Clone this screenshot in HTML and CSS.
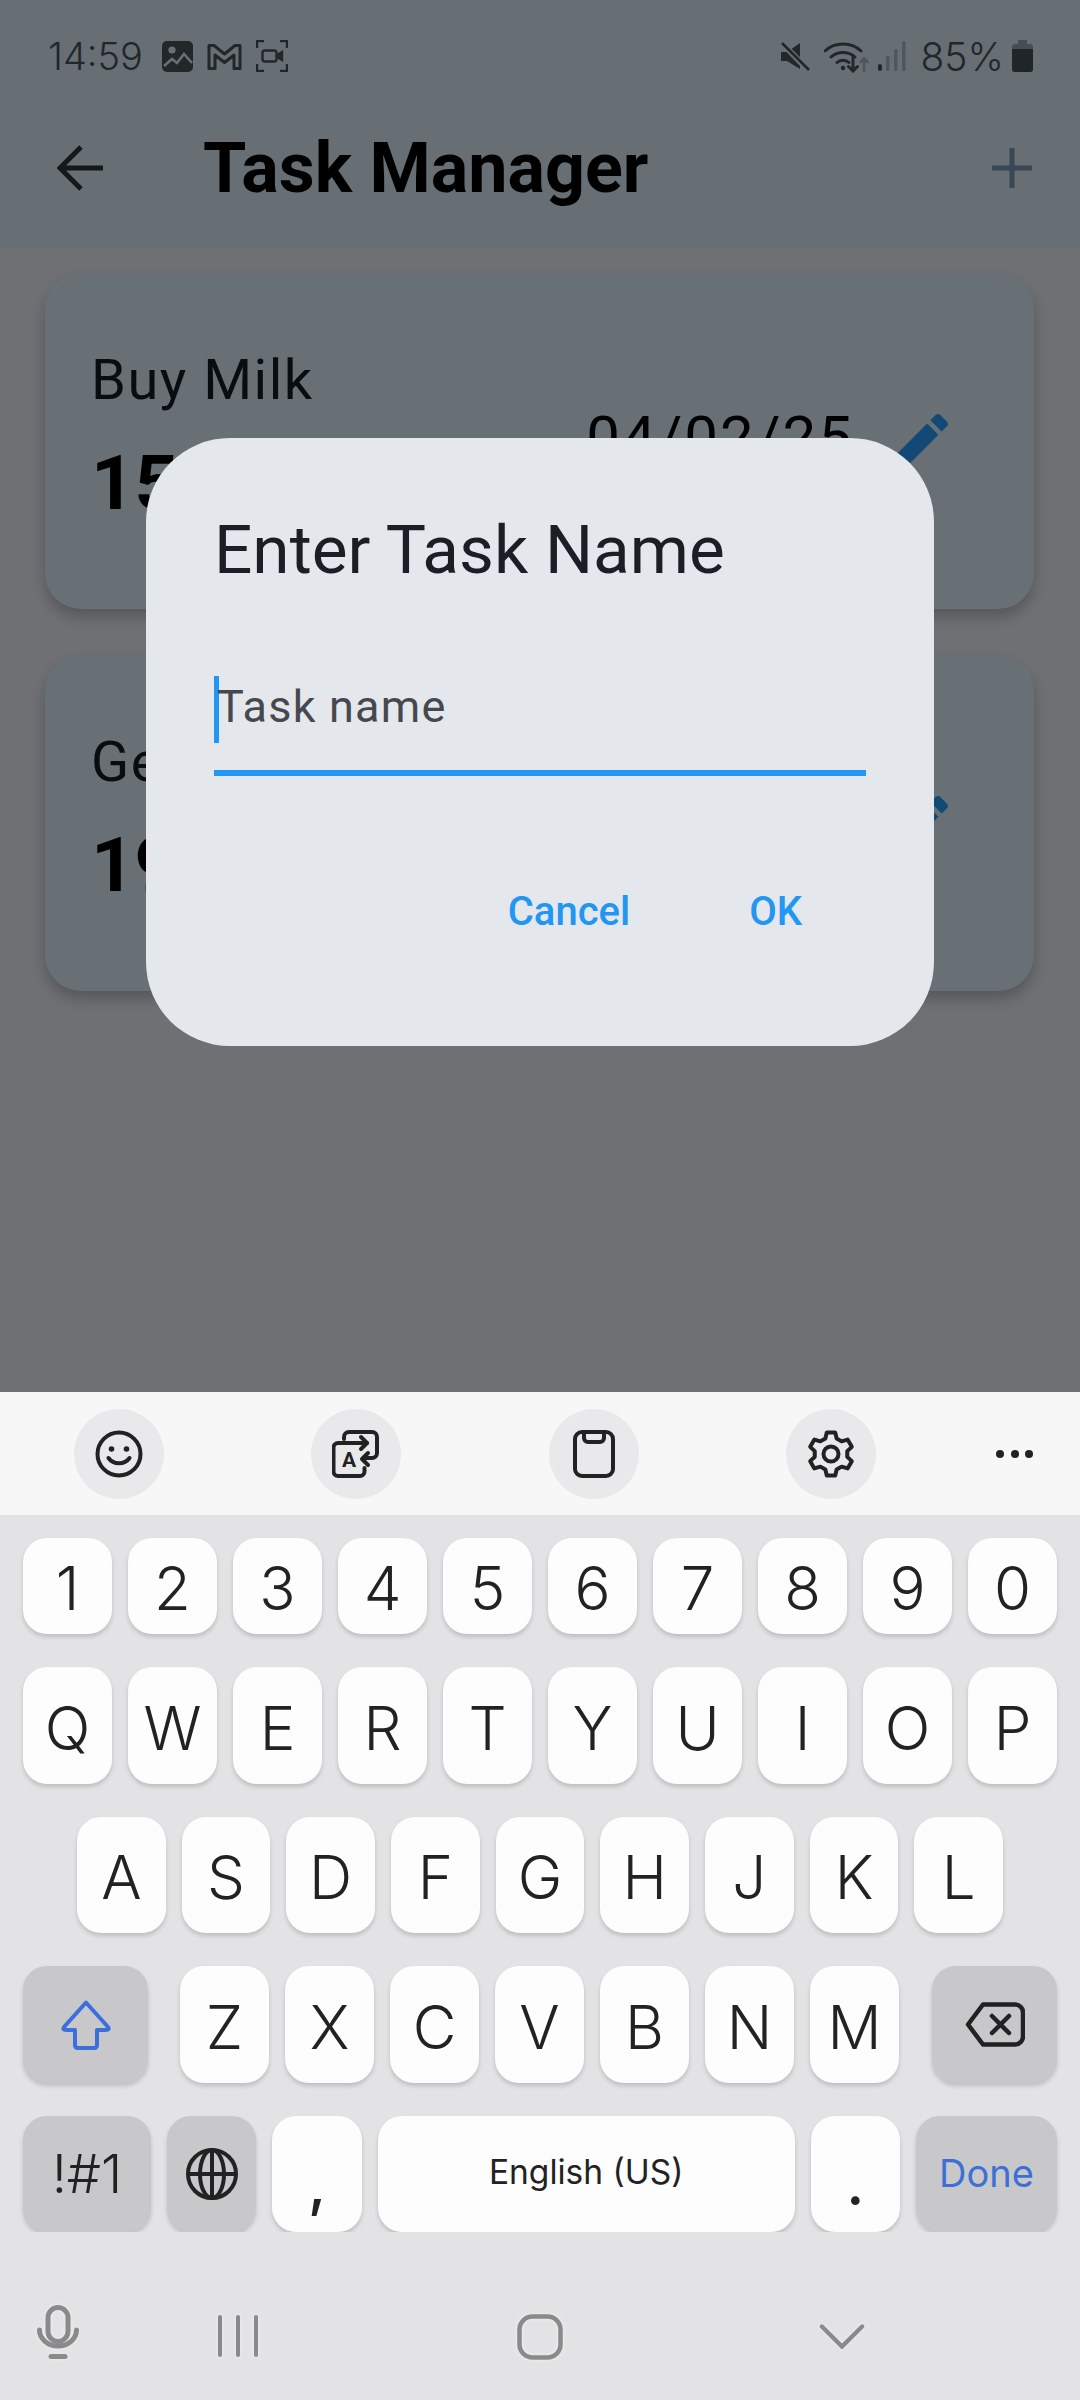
FILE: index.html
```html
<!DOCTYPE html>
<html lang="en">
  <head>
    <meta charset="UTF-8" />
    <meta name="viewport" content="width=device-width, initial-scale=1.0" />
    <title>Task Manager</title>
    <link rel="stylesheet" href="styles.css">
  </head>
  <body>
    <div class="phone">
      <!-- Dimmed app behind the dialog -->
      <div class="app">
        <header class="top">
          <div class="status">
            <span class="clock">14:59</span>
            <svg class="st-photo" viewBox="0 0 31 31"><rect width="31" height="31" rx="5" fill="#22272a"/><circle cx="10" cy="9" r="3.6" fill="#687076"/><path d="M2 25l8-7 5 4 7-9 8 9" fill="none" stroke="#687076" stroke-width="2.6"/></svg>
            <svg class="st-mail" viewBox="0 0 35 27"><path d="M2 25.5V2.5h5L17.5 11 28 2.500h5v23h-6V12l-9.500 7.500L8 12v13.500z" fill="none" stroke="#22272a" stroke-width="3" stroke-linejoin="round"/></svg>
            <svg class="st-rec" viewBox="0 0 32 32" fill="none" stroke="#22272a" stroke-width="2.400"><path d="M1 8V1h7M24 1h7v7M31 24v7h-7M8 31H1v-7"/><rect x="6.500" y="10.500" width="14" height="11" rx="2.500"/><path d="M21 15l5-3v8l-5-3" fill="#22272a"/></svg>
            <span class="spacer"></span>
            <svg class="st-mute" viewBox="0 0 30 29"><path d="M1 10h6L20 1v26L7 19H1z" fill="#22272a"/><path d="M1 0l28 29" stroke="#687076" stroke-width="6"/><path d="M2 1l27 27" stroke="#22272a" stroke-width="2.600"/></svg>
            <svg class="st-wifi" viewBox="0 0 46 33" fill="none" stroke="#22272a" stroke-width="3" stroke-linecap="round"><path d="M1 11a27 27 0 0 1 36 0"/><path d="M7 17a18 18 0 0 1 24 0"/><path d="M13 22.500a9 9 0 0 1 12 0"/><circle cx="19" cy="28" r="2.200" fill="#22272a" stroke="none"/><path d="M29 16v15M24.500 26.500l4.500 4.500 4.500-4.500"/><path d="M40 31V19M36.500 22l3.500-3.500 3.500 3.500" stroke="#4d555a" stroke-width="2.500"/></svg>
            <svg class="st-signal" viewBox="0 0 28 30" fill="#50575c"><rect x="0" y="23" width="4" height="7" rx="2" fill="#22272a"/><rect x="8" y="15" width="3.500" height="15" rx="1.500"/><rect x="16" y="8" width="3.500" height="22" rx="1.500"/><rect x="24" y="0" width="3.500" height="30" rx="1.500"/></svg>
            <span class="percent">85%</span>
            <svg class="st-batt" viewBox="0 0 21 32"><path d="M6 0h9v5H6z" fill="#474e53"/><rect y="4" width="21" height="28" rx="3" fill="#474e53"/><path d="M0 9h21v20a3 3 0 0 1-3 3H3a3 3 0 0 1-3-3z" fill="#1f2528"/></svg>
          </div>
          <div class="appbar">
            <svg class="back" viewBox="0 0 46 46" fill="none" stroke="#14181b" stroke-width="5"><path d="M46 23H4M24 2L3 23l21 21"/></svg>
            <h1 class="title">Task Manager</h1>
            <svg class="plus" viewBox="0 0 40 40" stroke="#3a4754" stroke-width="5"><path d="M20 0v40M0 20h40"/></svg>
          </div>
        </header>

        <main class="tasks">
          <div class="card">
            <div class="card-text">
              <div class="task-name">Buy Milk</div>
              <div class="task-time">15:30</div>
            </div>
            <div class="task-date">04/02/25</div>
            <svg class="edit" viewBox="0 0 24 24" fill="#124a75"><path d="M3 17.250V21h3.750L17.810 9.940l-3.750-3.750L3 17.250zM20.710 7.040c.39-.39.39-1.020 0-1.410l-2.340-2.340c-.39-.39-1.020-.39-1.410 0l-1.830 1.830 3.750 3.750 1.830-1.830z"/></svg>
          </div>
          <div class="card">
            <div class="card-text">
              <div class="task-name">Get Eggs</div>
              <div class="task-time">19:00</div>
            </div>
            <div class="task-date">05/02/25</div>
            <svg class="edit" viewBox="0 0 24 24" fill="#124a75"><path d="M3 17.250V21h3.750L17.810 9.940l-3.750-3.750L3 17.250zM20.710 7.040c.39-.39.39-1.020 0-1.410l-2.340-2.340c-.39-.39-1.020-.39-1.410 0l-1.830 1.830 3.750 3.750 1.830-1.830z"/></svg>
          </div>
        </main>

        <!-- Dialog -->
        <div class="dialog">
          <h2 class="dialog-title">Enter Task Name</h2>
          <div class="field">
            <span class="caret"></span>
            <span class="placeholder">Task name</span>
          </div>
          <div class="actions">
            <span class="action">Cancel</span>
            <span class="action">OK</span>
          </div>
        </div>
      </div>

      <!-- Keyboard -->
      <div class="toolbar">
        <div class="tools">
          <div class="tool">
            <svg viewBox="0 0 48 48" fill="none" stroke="#222" stroke-width="4" stroke-linecap="round"><circle cx="24" cy="24" r="21.500"/><circle cx="16.500" cy="19" r="2.800" fill="#222" stroke="none"/><circle cx="31.500" cy="19" r="2.800" fill="#222" stroke="none"/><path d="M13.500 28c5 7 16 7 21 0"/></svg>
          </div>
          <div class="tool">
            <svg viewBox="0 0 48 48" fill="none" stroke="#222" stroke-width="4" stroke-linecap="round" stroke-linejoin="round"><path d="M12 9V7a5 5 0 0 1 5-5h23a5 5 0 0 1 5 5v16a5 5 0 0 1-5 5h-8"/><path d="M35 13H6a4.500 4.500 0 0 0-4.500 4.500v24A4.500 4.500 0 0 0 6 46h22a4.500 4.500 0 0 0 4.500-4.500V38"/><path d="M29 7l6 6-6 6M36 23l-6 6 6 6"/><text x="17" y="37" text-anchor="middle" class="tool-a">A</text></svg>
          </div>
          <div class="tool">
            <svg viewBox="0 0 48 48" fill="none" stroke="#222" stroke-width="4" stroke-linejoin="round"><rect x="5" y="2" width="38" height="44" rx="7"/><path d="M14 2v6a4 4 0 0 0 4 4h12a4 4 0 0 0 4-4V2"/></svg>
          </div>
          <div class="tool">
            <svg viewBox="0 0 48 48" fill="none" stroke="#222" stroke-width="4" stroke-linejoin="round"><path d="M18.360 8.500L19.800 2.400h8.400l1.440 6.100 4.960 2.860 6-1.790 4.200 7.270-4.550 4.290v5.740l4.550 4.290-4.200 7.270-6-1.790-4.960 2.860-1.440 6.100h-8.400l-1.440-6.100-4.960-2.860-6 1.790-4.200-7.270 4.550-4.290v-5.740L3.200 16.840l4.200-7.270 6 1.790z"/><circle cx="24" cy="24" r="7.500"/></svg>
          </div>
        </div>
        <div class="more"><i></i><i></i><i></i></div>
      </div>

      <div class="keyboard">
        <div class="row row-num">
          <div class="key">1</div><div class="key">2</div><div class="key">3</div><div class="key">4</div><div class="key">5</div>
          <div class="key">6</div><div class="key">7</div><div class="key">8</div><div class="key">9</div><div class="key">0</div>
        </div>
        <div class="row row-tall">
          <div class="key">Q</div><div class="key">W</div><div class="key">E</div><div class="key">R</div><div class="key">T</div>
          <div class="key">Y</div><div class="key">U</div><div class="key">I</div><div class="key">O</div><div class="key">P</div>
        </div>
        <div class="row row-short row-home">
          <div class="key">A</div><div class="key">S</div><div class="key">D</div><div class="key">F</div><div class="key">G</div>
          <div class="key">H</div><div class="key">J</div><div class="key">K</div><div class="key">L</div>
        </div>
        <div class="row row-tall">
          <div class="key key-fn key-shift">
            <svg class="ic-shift" viewBox="0 0 50 50" fill="none" stroke="#3b6fdc" stroke-width="4" stroke-linejoin="round"><path d="M25 2.500L47 27q2 3-2 3h-9v15q0 3-3 3H17q-3 0-3-3V30H5q-4 0-2-3z"/></svg>
          </div>
          <div class="key">Z</div><div class="key">X</div><div class="key">C</div><div class="key">V</div>
          <div class="key">B</div><div class="key">N</div><div class="key">M</div>
          <div class="key key-fn key-back">
            <svg class="ic-back" viewBox="0 0 60 45" fill="none" stroke="#222" stroke-width="4.500" stroke-linecap="round" stroke-linejoin="round"><path d="M18 2.500h32a8 8 0 0 1 8 8v24a8 8 0 0 1-8 8H18L3 22.500z"/><path d="M27 14l17 17M44 14L27 31"/></svg>
          </div>
        </div>
        <div class="row row-short">
          <div class="key key-fn key-sym">!#1</div>
          <div class="key key-fn">
            <svg class="ic-globe" viewBox="0 0 52 52" fill="none" stroke="#222" stroke-width="4"><circle cx="26" cy="26" r="24"/><ellipse cx="26" cy="26" rx="12" ry="24"/><path d="M26 2v48M2 26h48"/></svg>
          </div>
          <div class="key key-punct">,</div>
          <div class="key key-space">English (US)</div>
          <div class="key key-punct">.</div>
          <div class="key key-fn key-done">Done</div>
        </div>
      </div>

      <nav class="navbar">
        <svg class="nav-mic" viewBox="0 0 42 54" fill="none" stroke="#8a8a8a" stroke-width="5" stroke-linecap="round"><rect x="11" y="2.500" width="20" height="34" rx="10"/><path d="M2.500 25a18.500 16 0 0 0 37 0"/><path d="M14 51.500h14"/></svg>
        <svg class="nav-recent" viewBox="0 0 42 42" stroke="#8a8a8a" stroke-width="4" stroke-linecap="round"><path d="M3 2v38M21 2v38M39 2v38"/></svg>
        <svg class="nav-home" viewBox="0 0 46 46" fill="none" stroke="#8a8a8a" stroke-width="4.500"><rect x="2.500" y="2.500" width="41" height="41" rx="13"/></svg>
        <svg class="nav-hide" viewBox="0 0 48 26" fill="none" stroke="#8a8a8a" stroke-width="4.500" stroke-linecap="round"><path d="M3 3l21 21L45 3"/></svg>
      </nav>
    </div>
  </body>
</html>
```

FILE: styles.css
```css
* {
  box-sizing: border-box;
}

html,
body {
  margin: 0;
  padding: 0;
}

body {
  font-family: Roboto, "Liberation Sans", sans-serif;
  background-color: #e3e3e5;
}

svg {
  display: block;
  flex: none;
}

.phone {
  width: 1080px;
  height: 2400px;
  display: flex;
  flex-direction: column;
  overflow: hidden;
}

.app {
  position: relative;
  height: 1392px;
  background-color: #6f7074;
}

/* App bar and status bar */
.top {
  height: 248px;
  background-color: #676e74;
}

.status {
  height: 112px;
  padding: 0 47px 0 48px;
  display: flex;
  align-items: center;
  color: #22272a;
}

.clock,
.percent {
  font-family: Inter, Roboto, sans-serif;
  font-size: 38px;
  font-weight: 300;
  line-height: 1;
}

.clock {
  width: 96px;
}

.st-photo {
  width: 31px;
  height: 31px;
  margin-left: 18px;
}

.st-mail {
  width: 35px;
  height: 27px;
  margin-left: 14px;
}

.st-rec {
  width: 32px;
  height: 32px;
  margin-left: 14px;
}

.spacer {
  flex: 1;
}

.st-mute {
  width: 30px;
  height: 29px;
}

.st-wifi {
  width: 46px;
  height: 33px;
  margin-left: 14px;
}

.st-signal {
  width: 28px;
  height: 30px;
  margin-left: 8px;
}

.percent {
  margin-left: 14px;
  font-size: 39px;
}

.st-batt {
  width: 21px;
  height: 32px;
  margin-left: 8px;
}

.appbar {
  height: 136px;
  padding: 0 48px 24px 57px;
  display: flex;
  align-items: center;
}

.back {
  width: 46px;
  height: 46px;
}

.title {
  flex: 1;
  margin: 0 0 0 100px;
  font-size: 70px;
  font-weight: 700;
  color: #000;
}

.plus {
  width: 40px;
  height: 40px;
}

/* Task cards */
.tasks {
  padding: 25px 46px 0 45px;
  display: flex;
  flex-direction: column;
  gap: 46px;
}

.card {
  height: 336px;
  padding: 0 77px 0 46px;
  display: flex;
  align-items: center;
  background-color: #687076;
  border-radius: 36px;
  box-shadow: 0 8px 14px rgba(0, 0, 0, 0.22);
}

.card-text {
  flex: 1;
  padding-bottom: 7px;
}

.task-name {
  font-size: 56px;
  line-height: 66px;
  letter-spacing: 1.5px;
  color: #0a0d0f;
}

.task-time {
  margin-top: 25px;
  font-size: 76px;
  line-height: 90px;
  font-weight: 700;
  color: #000;
}

.task-date {
  margin-bottom: 8px;
  font-size: 60px;
  letter-spacing: 2px;
  color: #000;
}

.edit {
  width: 72px;
  height: 72px;
  margin-left: 31px;
}

/* Dialog */
.dialog {
  position: absolute;
  left: 146px;
  top: 438px;
  width: 788px;
  height: 608px;
  padding: 72px 68px 0;
  background-color: #e4e7ec;
  border-radius: 84px;
}

.dialog-title {
  margin: 0;
  font-size: 67.5px;
  font-weight: 400;
  line-height: 80px;
  color: #1b1f25;
}

.field {
  height: 100px;
  margin-top: 86px;
  display: flex;
  align-items: flex-start;
  border-bottom: 6px solid #2196f3;
}

.caret {
  width: 5px;
  height: 67px;
  background-color: #2196f3;
}

.placeholder {
  margin-top: 5px;
  margin-left: -2px;
  font-size: 45px;
  line-height: 52px;
  letter-spacing: 1.2px;
  color: #45494f;
}

.actions {
  margin-top: 112px;
  padding-right: 64px;
  display: flex;
  justify-content: flex-end;
  gap: 119px;
}

.action {
  font-size: 40px;
  font-weight: 500;
  line-height: 48px;
  color: #2196f3;
}

/* Keyboard */
.toolbar {
  height: 123px;
  padding: 0 47px 0 74px;
  display: flex;
  align-items: center;
  justify-content: space-between;
  background-color: #f7f7f8;
}

.tools {
  display: flex;
  gap: 147.300px;
}

.tool {
  flex: none;
  width: 90px;
  height: 90px;
  display: flex;
  align-items: center;
  justify-content: center;
  background-color: #e9e9eb;
  border-radius: 50%;
}

.tool svg {
  width: 48px;
  height: 48px;
}

.tool-a {
  font-family: Roboto, sans-serif;
  font-size: 21px;
  font-weight: 700;
  fill: #222;
  stroke: none;
}

.more {
  width: 37px;
  display: flex;
  justify-content: space-between;
}

.more i {
  width: 8px;
  height: 8px;
  background-color: #222;
  border-radius: 50%;
}

.keyboard {
  padding-top: 23px;
  display: flex;
  flex-direction: column;
  gap: 33px;
  background-color: #e3e3e5;
}

.row {
  padding: 0 23px;
  display: flex;
  gap: 16px;
}

.row-num {
  height: 96px;
}

.row-tall {
  height: 117px;
}

.row-short {
  height: 116px;
}

.row-home {
  padding: 0 77px;
}

.key {
  flex: 1;
  min-width: 0;
  padding-top: 4px;
  display: flex;
  align-items: center;
  justify-content: center;
  font-family: Inter, Roboto, sans-serif;
  font-size: 60px;
  font-weight: 300;
  color: #222;
  background-color: #fdfdfe;
  border-radius: 24px;
  box-shadow: 0 3px 4px rgba(0, 0, 0, 0.16);
}

.key-fn {
  padding-top: 0;
  background-color: #c8c8ca;
}

.key-shift,
.key-back {
  flex: none;
  width: 125px;
}

.key-shift {
  margin-right: 16px;
}

.key-back {
  margin-left: 17px;
}

.ic-shift {
  width: 50px;
  height: 50px;
}

.ic-back {
  width: 60px;
  height: 45px;
}

.ic-globe {
  width: 52px;
  height: 52px;
}

.key-sym {
  flex: none;
  width: 128px;
  padding-bottom: 2px;
  font-size: 54px;
}

.key-punct {
  padding-top: 18px;
  font-weight: 500;
}

.key-space {
  flex: none;
  width: 417px;
  padding: 0 0 4px;
  font-size: 33.500px;
  font-weight: 400;
}

.key-done {
  flex: none;
  width: 141px;
  padding-bottom: 2px;
  font-size: 38px;
  font-weight: 400;
  color: #3d6fd6;
}

.navbar {
  flex: 1;
  padding: 68px 0 0 37px;
  display: flex;
  align-items: flex-start;
  background-color: #e3e3e5;
}

.navbar svg {
  filter: drop-shadow(0 0 2px #f1f1f2);
}

.nav-mic {
  width: 42px;
  height: 54px;
  margin-top: 5px;
}

.nav-recent {
  width: 42px;
  height: 42px;
  margin-top: 15px;
  margin-left: 138px;
}

.nav-home {
  width: 46px;
  height: 46px;
  margin-top: 14px;
  margin-left: 258px;
}

.nav-hide {
  width: 46px;
  height: 26px;
  margin-top: 23px;
  margin-left: 256px;
}
```
